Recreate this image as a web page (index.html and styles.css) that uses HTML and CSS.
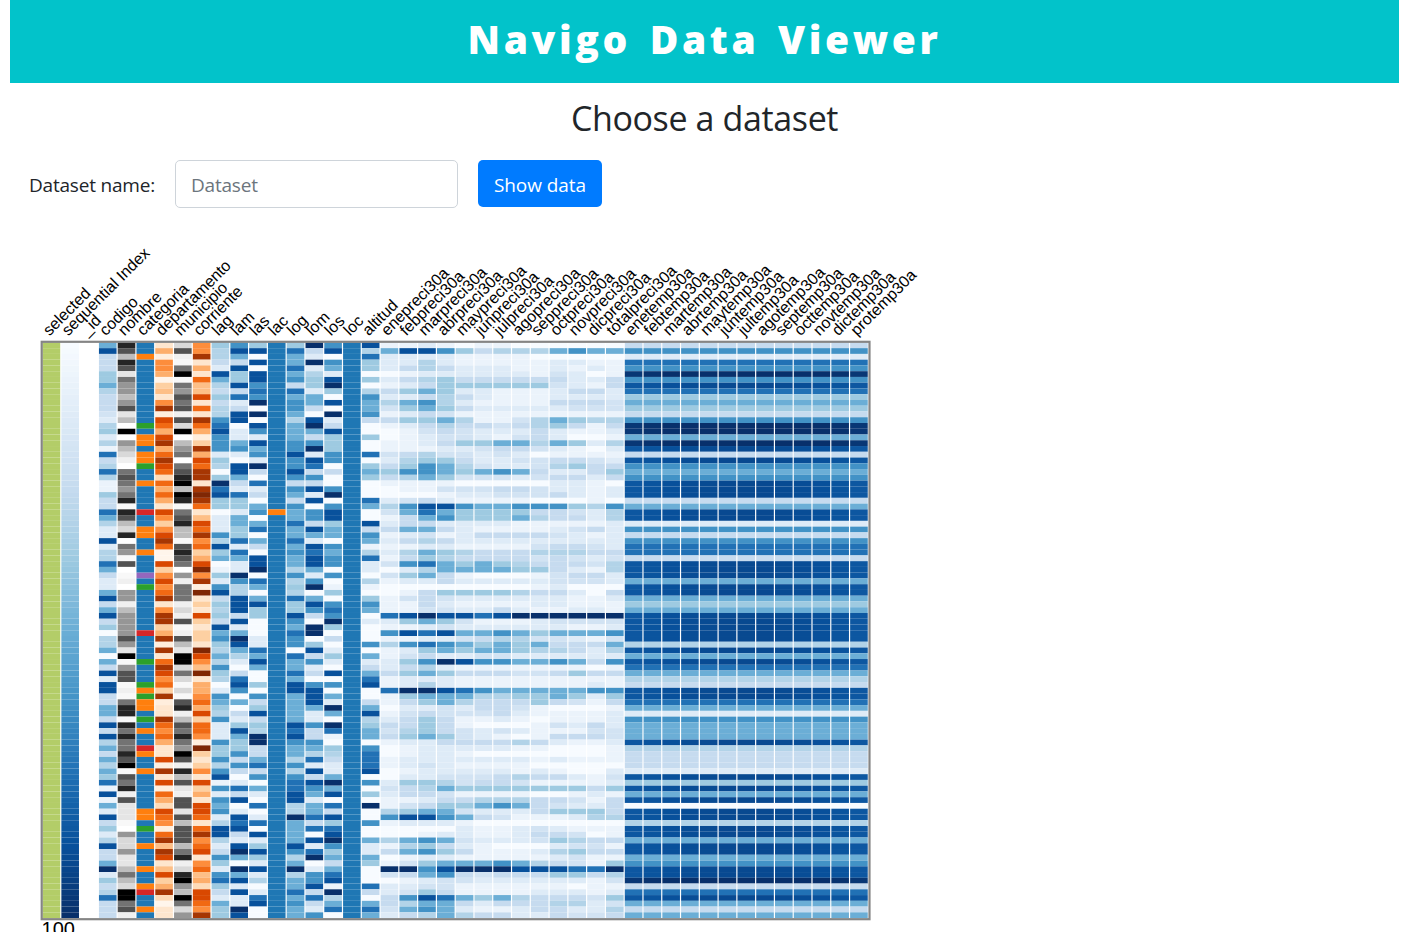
FILE: index.html
```html
<!DOCTYPE html>
<html lang="en">
<head>
<meta charset="utf-8">
<title>Navigo Data Viewer</title>
<link rel="stylesheet" href="styles.css">
</head>
<body>
<div class="page">
  <header class="banner"><h1 class="banner-title">Navigo Data Viewer</h1></header>
  <h2 class="section-title">Choose a dataset</h2>
  <form class="dataset-form">
    <label class="dataset-label" for="dataset">Dataset name:</label>
    <input class="dataset-input" id="dataset" type="text" placeholder="Dataset">
    <button class="dataset-button" type="button">Show data</button>
  </form>
  <svg class="heatmap" id="heatmap" width="940" height="724" viewBox="0 0 940 724"></svg>
</div>
<script src="heatmap.js"></script>
</body>
</html>
```
FILE: styles.css
```css
* { box-sizing: border-box; }
html, body { height: 100%; overflow: hidden; }
body {
  margin: 0;
  background: #fff;
  color: #212529;
  font-family: "Open Sans", "Noto Sans", sans-serif;
}
.page { width: 1389px; margin-left: 10px; display: flex; flex-direction: column; }
.banner {
  height: 83px;
  background: #02c3ca;
  display: flex;
  justify-content: center;
  align-items: center;
  flex: none;
}
.banner-title {
  margin: 0;
  padding-bottom: 5px;
  color: #fff;
  font-size: 39px;
  line-height: 50px;
  font-weight: 800;
  letter-spacing: 3.6px;
  word-spacing: 5px;
  white-space: nowrap;
}
.section-title {
  margin: 0;
  height: 77px;
  padding-top: 13px;
  text-align: center;
  font-size: 34px;
  line-height: 44px;
  font-weight: 400;
  letter-spacing: -0.37px;
}
.dataset-form {
  display: flex;
  align-items: flex-start;
  gap: 20px;
  padding-left: 19px;
  height: 48px;
}
.dataset-label {
  width: 126px;
  font-size: 19px;
  line-height: 50px;
  white-space: nowrap;
  letter-spacing: -0.2px;
}
.dataset-input {
  width: 283px;
  height: 48px;
  padding: 2px 15px 0;
  border: 1px solid #ced4da;
  border-radius: 5px;
  font: 19px "Open Sans", sans-serif;
  letter-spacing: -0.2px;
}
.dataset-input::placeholder { color: #6c757d; opacity: 1; }
.dataset-button {
  width: 124px;
  height: 47px;
  padding: 2px 0 0;
  border: 0;
  border-radius: 5px;
  background: #007bff;
  color: #fff;
  font: 19px "Open Sans", sans-serif;
  letter-spacing: -0.05px;
  white-space: nowrap;
}
.heatmap { display: block; }
.col-label { font: 16px "Liberation Sans", Arial, sans-serif; fill: #000; }
.count-label { font: 20px "Liberation Sans", Arial, sans-serif; fill: #000; }
.frame { fill: none; stroke: #858585; stroke-width: 2.2; }
```
FILE: heatmap.js
```js
const names = ("selected|sequential Index|_id|codigo|nombre|categoria|departamento|municipio|corriente|" +
  "lag|lam|las|lac|log|lom|los|loc|altitud").split("|");
const months = ["ene", "feb", "mar", "abr", "may", "jun", "jul", "ago", "sep", "oct", "nov", "dic"];
months.forEach(m => names.push(m + "preci30a"));
names.push("totalpreci30a");
months.forEach(m => names.push(m === "sep" ? "septemp30a" : m + "temp30a"));
names.push("protemp30a");

const ramps = {
  blues: ["f7fbff", "deebf7", "c6dbef", "9ecae1", "6baed6", "4292c6", "2171b5", "08519c", "08306b"],
  greys: ["ffffff", "f0f0f0", "d9d9d9", "bdbdbd", "969696", "737373", "525252", "252525", "000000"],
  oranges: ["fff5eb", "fee6ce", "fdd0a2", "fdae6b", "fd8d3c", "f16913", "d94801", "a63603", "7f2704"]
};
const category = { B: "#1f77b4", O: "#ff7f0e", G: "#2ca02c", R: "#d62728", P: "#9467bd" };

// Levels 0-8; a, b and c are the half steps 0.5, 1.5 and 2.5.
const level = ch => ({ a: 0.5, b: 1.5, c: 2.5 })[ch] ?? Number(ch);
function shade(ramp, v) {
  v = Math.max(0, Math.min(8, v));
  const i = Math.min(7, Math.floor(v)), t = v - i;
  const part = (s, k) => parseInt(s.slice(k, k + 2), 16);
  return "rgb(" + [0, 2, 4].map(k =>
    Math.round(part(ramps[ramp][i], k) * (1 - t) + part(ramps[ramp][i + 1], k) * t)).join(",") + ")";
}
const pack = s => s.replace(/\s/g, "");

const columns = {
  3: ["blues", `47222 334c2 22b1c 31ca6 2c6ca  a3226 4c117 1cc64 21147 24723
                0cc40 42717 72244 2727c 424c4  36a7a 41723 1c722 4813 2c6222`],
  4: ["greys", `76376 b5443 46b30 80432 10565  457a7 63270 54a60 a1044 13444
                464b8 a466a 1a577 a7575 5768a  65716 bbba0 4224b b3532 88561`],
  6: ["oranges", `13a44 302c1 47a65 36735 765b5  35316 42467 50062 46457 14772
                  37a71 57645 27a11 75453 116a7  16a53 b654a 57c76 1c623 7b011`],
  7: ["greys", `261a5 8a546 56162 80345 05678  387a5 6733a 67650 41555 1216a
                163b8 8252a 2a671 36575 48617  36b16 6b636 66357 12784 38524`],
  8: ["oranges", `44713 15cc6 15175 3a273 65771  78751 c6574 52368 47a81 21621
                  22186 4c813 34536 2554a 82124  16231 66515 74561 45c3b 66547`],
  9: ["blues", `3cc21 74c23 2cc56 75551 3c038  67330 1115c 7340a 31572 3c327
                453c4 c53c0 1543c 51115 335c5  7a515 451c7 7c125 31563 21433`],
  10: ["blues", `57427 33726 12770 11451 07742  16331 44336 16411 85cc7 77271
                 4874c 10267 50402 13743 35252  01627 01767 21784 08471 71187`],
  11: ["blues", `37070 77565 80807 51745 18206  12045 04604 20778 06404 73300
                 01164 74003 05237 23c88 22462  50410 60160 71373 171c0 16700`],
  13: ["blues", `36446 45264 554c4 44557 55752  54254 46446 4544c 5c3c6 33754
                 65506 44647 74444 47675 44c5c  56677 cc844 4475c 48c44 64544`],
  14: ["blues", `82181 c3314 42078 42581 76252  71705 52741 76774 15804 75208
                 80372 51205 77741 15225 4c617  27541 44626 07168 01557 26215`],
  15: ["blues", `57054 17830 70812 73335 50200  58057 73440 54550 50a30 56583
                 02013 10705 04184 086a0 3c211  48470 62736 78534 2467a 8c460`],
  17: ["blues", `7c633 030c5 44520 03006 03430  00640 07254 ac611 0ca03 54010
                 00504 12467 00247 c3440 56667  05030 80050 04114 30006 20464`]
};
for (const c in columns) columns[c][1] = pack(columns[c][1]);

const rowCategories = pack(`BBOBB BBBBB BBBBG BOOBO OGBBO  BBBBR BBOOB BOBBB PBGBB BBBBB
                            RBBBB GBBBG OGOOB GBOBB ROBBO  BBBBB BOOBG BBOBB BOBBO RBBOB`);

// One word per row: twelve months of rainfall and the total.
const rain = `
  aa1a0aa000000 477532ccc4544 1111aaaa00000 11c1aaaaa11aa 12c2111aa1a1a 0a111111ab10a 12c3222222112 a12333333b1a2
  234311aaa1221 112c21aaa1111 c45c1aaaa222b b343211111bbb a12baaaaaaaaa 2334caabc43cc a12c22b2c32a2 0ab2b11121aa1
  0a1bb1ab2100a aa123344c431c aaa11b22b1a01 b2cbb1b10aaaa 1c33211bb22b1 2354cb11bc322 3554345421123 2c43bbb1b2212
  aaaa0000011a0 0aabbb22b11a1 000a11bbb21a1 1b21aaaa000a0 c5775445553c5 b464333322b1c a2453334c221c 1221111aaaaa1
  24421aaaa1b21 a1ba12222b1a1 12c2111111111 aa11aaaab22b1 1c43c222ccc22 a23c2222b2b1b b564343c222bc 01c44443321ac
  b342a000ab221 a11211111bbb1 00000000a1000 0a23333c22102 ab2b111111aa1 aa21aaaa11aaa aabb1121aa11a 6787767888888
  1343baaa1bbbb aa1b111111aa1 5767445434445 aa11b2ccbb1ab c565434342224 a1343443cc21c ab211bb111111 1358755445425
  12c1aaaaaaa0a 2343222bb2322 a111aaaaaaaaa a1c1aaaaaaa1a 6887654444455 a3444cc334313 a234c22232ba2 011b122ba000a
  ab2bbb21aaaa1 1232aa1a0aaa1 2232a000ab121 bc32b1b1aaabb 2343b1a0a222b a112222c21aa1 0a11111aa000a 0a11a0000000a
  a1111111a1aaa a1b1aaaa00000 0a11111a1a001 011bbb2c221ab 133cb22baaaa1 b2c4333333323 122baaaa00a1a aa122ccc22ba2
  ab2334542b112 c344b11123332 577542baaa1cc a111a00000000 00001aa1b1aaa 00a11aa122b0a c454b111b3c22 ac321a0001bba
  24532aaa1c322 0a11aaaaa1baa ab344454c2ba3 8857888777668 b2452b222332c 0a1bb111111ab 11bbaaaaaa0aa 1b32aaaa111a1
  2576434c222b3 2c4421222cc1b b4541aa12211c 12c4c22112bb2`.trim().split(/\s+/);

const warmth = pack(`25165 85763 43258 84872 75457  77247 71525 66277 74774 34777
                     77c74 764c2 77641 54447 c2221  73747 077c7 74774 57782 67424`);

const top0 = 134.4, left0 = 32.6, colPitch = 18.78, rowPitch = 5.757;
const parts = [];
const rect = (c, r, fill) => parts.push(
  `<rect x="${(left0 + c * colPitch).toFixed(2)}" y="${(top0 + r * rowPitch).toFixed(2)}" width="17.6" height="${rowPitch}" fill="${fill}"/>`);

for (let r = 0; r < 100; r++) {
  rect(0, r, "#b3cd68");
  rect(1, r, shade("blues", r / 99 * 8));
  rect(5, r, category[rowCategories[r]]);
  rect(12, r, r === 29 ? category.O : category.B);
  rect(16, r, category.B);
  for (const c in columns) rect(+c, r, shade(columns[c][0], level(columns[c][1][r])));
  const w = level(warmth[r]);
  for (let k = 0; k < 13; k++) {
    rect(18 + k, r, shade("blues", level(rain[r][k])));
    const drift = w >= 7 ? 0.45 * Math.sin(k / 12 * Math.PI) - 0.2 : 0;
    rect(31 + k, r, shade("blues", w + drift));
  }
}
parts.push(`<rect class="frame" x="31.7" y="133.8" width="827.8" height="577.4"/>`);
names.forEach((name, i) => {
  const x = (left0 + i * colPitch + 6.8).toFixed(2);
  parts.push(`<text class="col-label" transform="translate(${x} 128.4) rotate(-45)">${name}</text>`);
});
parts.push(`<text class="count-label" x="31.6" y="728.4">100</text>`);
document.getElementById("heatmap").innerHTML = parts.join("");
```
